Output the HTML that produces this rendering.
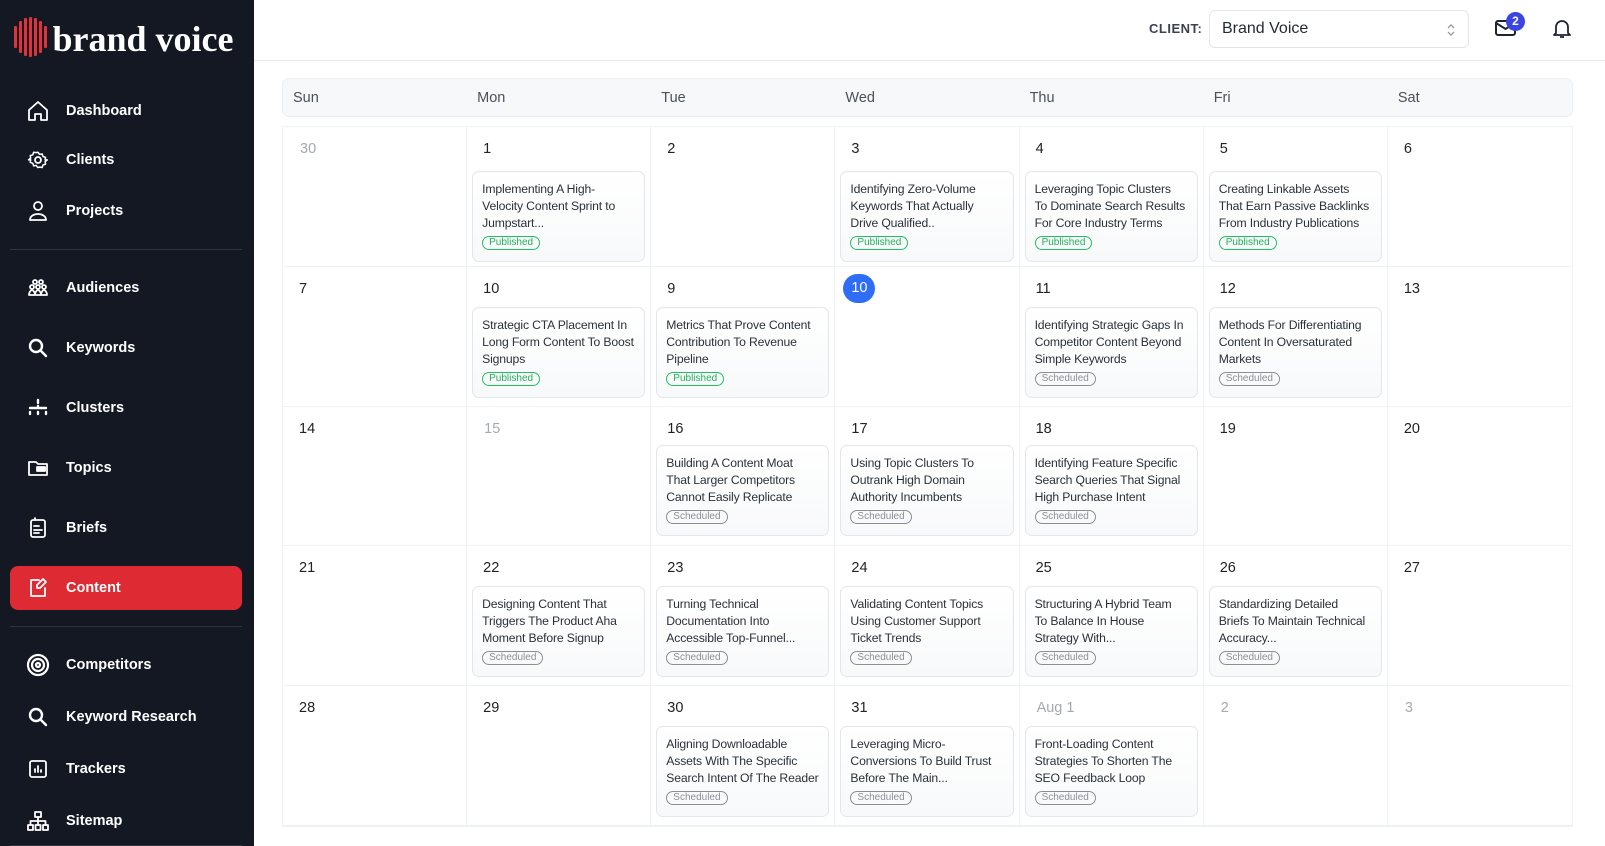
<!DOCTYPE html>
<html><head><meta charset="utf-8"><style>
*{box-sizing:border-box;margin:0;padding:0}
body{width:1605px;height:846px;overflow:hidden;font-family:"Liberation Sans",Arial,sans-serif;background:#fff;position:relative;color:#1f2430}
.sb{position:absolute;left:0;top:0;width:254px;height:846px;background:#131823;color:#fff}
.logo{position:absolute;left:14px;top:16px;display:flex;align-items:center}
.logo .bars{display:flex;gap:2.5px;align-items:center;margin-right:6px}
.logo .bars i{display:block;width:2.5px;background:#e0323a;border-radius:1px}
.logo span{font-family:"Liberation Serif",serif;font-weight:bold;font-size:36px;letter-spacing:0px;color:#fff;position:relative;top:2px}
.it{position:absolute;left:26px;display:flex;align-items:center;font-size:14.5px;font-weight:bold;height:24px}
.it svg{width:24px;height:24px;margin-right:16px;fill:none;stroke:#fff;stroke-width:1.8;stroke-linecap:round;stroke-linejoin:round}
.div{position:absolute;left:10px;width:232px;height:1px;background:#2c3342}
.act{position:absolute;left:10px;top:566px;width:232px;height:44px;background:#dd2a33;border-radius:8px}
.hdr{position:absolute;left:254px;top:0;right:0;height:61px;border-bottom:1px solid #e5e7eb}
.cl{position:absolute;left:1149px;top:21px;font-size:13px;font-weight:bold;color:#3a4150;letter-spacing:.5px}
.sel{position:absolute;left:1209px;top:10px;width:260px;height:38px;border:1px solid #e2e5ea;border-radius:6px;font-size:16px;padding:9px 12px;color:#252a35}
.wk{position:absolute;left:282px;top:78px;width:1291px;height:39px;background:#f7f8fa;border:1px solid #eceef2;border-radius:7px;display:grid;grid-template-columns:repeat(7,1fr)}
.wk div{font-size:14.5px;color:#4a505c;padding:11px 10px}
.grid{position:absolute;left:282px;top:126px;width:1291px;height:701px;display:grid;grid-template-columns:repeat(7,1fr);grid-template-rows:repeat(5,1fr);border:1px solid #eef1f5}
.c{border-right:1px solid #eef1f5;border-bottom:1px solid #eef1f5;position:relative}
.c:nth-child(7n){border-right:none}
.d{position:absolute;left:16px;top:14px;font-size:14.5px;color:#222}
.d.g{color:#a5a9b0;left:17px}
.d.t{left:8px;top:7px;width:32px;height:29px;border-radius:15px;background:#2f6df6;color:#fff;text-align:center;line-height:29px}
.card{position:absolute;left:5px;right:5px;top:44px;height:91px;border:1px solid #e3e6ea;border-radius:7px;background:linear-gradient(#fff,#f8f9fa);padding:9px 2px 0 9px;font-size:12.2px;letter-spacing:-0.15px;line-height:17px;color:#2b303a;white-space:nowrap;overflow:hidden}
.b{display:inline-block;margin-top:4px;font-size:10px;letter-spacing:0;line-height:12px;padding:0 6px;border-radius:8px;border:1px solid #22c063;color:#22b05c}
.b.s{border-color:#8a8f97;color:#8a8f97}
</style></head><body>
<div class="sb">
 <div class="logo"><div class="bars">
  <i style="height:22px"></i><i style="height:32px"></i><i style="height:38px"></i><i style="height:40px"></i><i style="height:38px"></i><i style="height:32px"></i><i style="height:22px"></i></div><span>brand voice</span></div>
 <div class="it" style="top:99px"><svg viewBox="0 0 24 24"><path d="M3 11l9-8 9 8v10h-6v-6h-6v6H3z"/></svg>Dashboard</div>
 <div class="it" style="top:148px"><svg viewBox="0 0 24 24"><circle cx="12" cy="12" r="3"/><path d="M12 3l2 2.5 3-.5 1 3 3 1-.5 3L23 12l-2.5 2 .5 3-3 1-1 3-3-.5L12 21l-2-2.5-3 .5-1-3-3-1 .5-3L1 12l2.5-2L3 7l3-1 1-3 3 .5z" transform="scale(.85) translate(2 2)"/></svg>Clients</div>
 <div class="it" style="top:199px"><svg viewBox="0 0 24 24"><circle cx="12" cy="7" r="4"/><path d="M4 21c0-4 4-6 8-6s8 2 8 6z"/></svg>Projects</div>
 <div class="div" style="top:249px"></div>
 <div class="it" style="top:276px"><svg viewBox="0 0 24 24"><circle cx="9" cy="6" r="2"/><circle cx="15" cy="6" r="2"/><circle cx="6" cy="11" r="2"/><circle cx="12" cy="11" r="2"/><circle cx="18" cy="11" r="2"/><path d="M3 19c0-3 2-5 3-5s3 2 3 5zM9 19c0-3 2-5 3-5s3 2 3 5zM15 19c0-3 2-5 3-5s3 2 3 5z"/></svg>Audiences</div>
 <div class="it" style="top:336px"><svg viewBox="0 0 24 24" style="stroke-width:2.4"><circle cx="10" cy="10" r="6"/><path d="M15 15l5 5"/></svg>Keywords</div>
 <div class="it" style="top:396px"><svg viewBox="0 0 24 24" style="stroke-width:2.4"><path d="M12 4v3M12 10v2M4 12h16M4 16v2M12 16v2M20 16v2"/></svg>Clusters</div>
 <div class="it" style="top:456px"><svg viewBox="0 0 24 24"><path d="M3 6h7l2 2h9v11H3z"/><rect x="11" y="11" width="8" height="4" fill="#fff"/></svg>Topics</div>
 <div class="it" style="top:516px"><svg viewBox="0 0 24 24"><rect x="5" y="4" width="14" height="17" rx="2"/><path d="M9 4V2M8 10h5M8 14h8M8 17h5"/></svg>Briefs</div>
 <div class="act"></div>
 <div class="it" style="top:576px"><svg viewBox="0 0 24 24"><path d="M13 4H5v16h14v-8"/><path d="M17 3l3 3-6 6h-3V9z"/></svg>Content</div>
 <div class="div" style="top:626px"></div>
 <div class="it" style="top:653px"><svg viewBox="0 0 24 24" style="stroke-width:2.2"><circle cx="12" cy="12" r="10"/><circle cx="12" cy="12" r="6"/><circle cx="12" cy="12" r="2"/></svg>Competitors</div>
 <div class="it" style="top:705px"><svg viewBox="0 0 24 24" style="stroke-width:2.4"><circle cx="10" cy="10" r="6"/><path d="M15 15l5 5"/></svg>Keyword Research</div>
 <div class="it" style="top:757px"><svg viewBox="0 0 24 24"><rect x="4" y="4" width="16" height="16" rx="2"/><path d="M9 15v-3M12 15V9M15 15v-2"/></svg>Trackers</div>
 <div class="it" style="top:809px"><svg viewBox="0 0 24 24"><rect x="9" y="3" width="6" height="5"/><rect x="2" y="16" width="5" height="5"/><rect x="9.5" y="16" width="5" height="5"/><rect x="17" y="16" width="5" height="5"/><path d="M12 8v4M4.5 16v-4h15v4M12 12v4"/></svg>Sitemap</div>
 <div class="div" style="top:845px"></div>
</div>
<div class="hdr"></div>
<div class="cl">CLIENT:</div>
<div class="sel">Brand Voice<svg style="position:absolute;right:12px;top:11px" width="10" height="16" viewBox="0 0 10 16" fill="none" stroke="#9aa0a8" stroke-width="1.4"><path d="M2 6l3-3 3 3M2 10l3 3 3-3"/></svg></div>
<svg style="position:absolute;left:1494px;top:17px" width="24" height="22" viewBox="0 0 24 22" fill="none" stroke="#1f2430" stroke-width="2"><rect x="2" y="4" width="19" height="14" rx="2"/><path d="M2 6l9.5 6L21 6"/></svg>
<div style="position:absolute;left:1506px;top:12px;width:19px;height:19px;border-radius:10px;background:#3b45e0;color:#fff;font-size:12px;font-weight:bold;text-align:center;line-height:19px">2</div>
<svg style="position:absolute;left:1550px;top:16px" width="24" height="24" viewBox="0 0 24 24" fill="none" stroke="#1f2430" stroke-width="1.8" stroke-linejoin="round"><path d="M6 17V11a6 6 0 0 1 12 0v6l2 2H4z"/><path d="M10 21h4"/></svg>
<div class="wk"><div>Sun</div><div>Mon</div><div>Tue</div><div>Wed</div><div>Thu</div><div>Fri</div><div>Sat</div></div>
<div class="grid">
<div class="c"><div class="d g">30</div></div>
<div class="c"><div class="d">1</div><div class="card">Implementing A High-<br>Velocity Content Sprint to<br>Jumpstart...<br><span class="b">Published</span></div></div>
<div class="c"><div class="d">2</div></div>
<div class="c"><div class="d">3</div><div class="card">Identifying Zero-Volume<br>Keywords That Actually<br>Drive Qualified..<br><span class="b">Published</span></div></div>
<div class="c"><div class="d">4</div><div class="card">Leveraging Topic Clusters<br>To Dominate Search Results<br>For Core Industry Terms<br><span class="b">Published</span></div></div>
<div class="c"><div class="d">5</div><div class="card">Creating Linkable Assets<br>That Earn Passive Backlinks<br>From Industry Publications<br><span class="b">Published</span></div></div>
<div class="c"><div class="d">6</div></div>

<div class="c"><div class="d">7</div></div>
<div class="c"><div class="d">10</div><div class="card" style="top:40px">Strategic CTA Placement In<br>Long Form Content To Boost<br>Signups<br><span class="b">Published</span></div></div>
<div class="c"><div class="d">9</div><div class="card" style="top:40px">Metrics That Prove Content<br>Contribution To Revenue<br>Pipeline<br><span class="b">Published</span></div></div>
<div class="c"><div class="d t">10</div></div>
<div class="c"><div class="d">11</div><div class="card" style="top:40px">Identifying Strategic Gaps In<br>Competitor Content Beyond<br>Simple Keywords<br><span class="b s">Scheduled</span></div></div>
<div class="c"><div class="d">12</div><div class="card" style="top:40px">Methods For Differentiating<br>Content In Oversaturated<br>Markets<br><span class="b s">Scheduled</span></div></div>
<div class="c"><div class="d">13</div></div>

<div class="c"><div class="d">14</div></div>
<div class="c"><div class="d g">15</div></div>
<div class="c"><div class="d">16</div><div class="card" style="top:38px">Building A Content Moat<br>That Larger Competitors<br>Cannot Easily Replicate<br><span class="b s">Scheduled</span></div></div>
<div class="c"><div class="d">17</div><div class="card" style="top:38px">Using Topic Clusters To<br>Outrank High Domain<br>Authority Incumbents<br><span class="b s">Scheduled</span></div></div>
<div class="c"><div class="d">18</div><div class="card" style="top:38px">Identifying Feature Specific<br>Search Queries That Signal<br>High Purchase Intent<br><span class="b s">Scheduled</span></div></div>
<div class="c"><div class="d">19</div></div>
<div class="c"><div class="d">20</div></div>

<div class="c"><div class="d">21</div></div>
<div class="c"><div class="d">22</div><div class="card" style="top:40px">Designing Content That<br>Triggers The Product Aha<br>Moment Before Signup<br><span class="b s">Scheduled</span></div></div>
<div class="c"><div class="d">23</div><div class="card" style="top:40px">Turning Technical<br>Documentation Into<br>Accessible Top-Funnel...<br><span class="b s">Scheduled</span></div></div>
<div class="c"><div class="d">24</div><div class="card" style="top:40px">Validating Content Topics<br>Using Customer Support<br>Ticket Trends<br><span class="b s">Scheduled</span></div></div>
<div class="c"><div class="d">25</div><div class="card" style="top:40px">Structuring A Hybrid Team<br>To Balance In House<br>Strategy With...<br><span class="b s">Scheduled</span></div></div>
<div class="c"><div class="d">26</div><div class="card" style="top:40px">Standardizing Detailed<br>Briefs To Maintain Technical<br>Accuracy...<br><span class="b s">Scheduled</span></div></div>
<div class="c"><div class="d">27</div></div>

<div class="c"><div class="d">28</div></div>
<div class="c"><div class="d">29</div></div>
<div class="c"><div class="d">30</div><div class="card" style="top:40px">Aligning Downloadable<br>Assets With The Specific<br>Search Intent Of The Reader<br><span class="b s">Scheduled</span></div></div>
<div class="c"><div class="d">31</div><div class="card" style="top:40px">Leveraging Micro-<br>Conversions To Build Trust<br>Before The Main...<br><span class="b s">Scheduled</span></div></div>
<div class="c"><div class="d g">Aug 1</div><div class="card" style="top:40px">Front-Loading Content<br>Strategies To Shorten The<br>SEO Feedback Loop<br><span class="b s">Scheduled</span></div></div>
<div class="c"><div class="d g">2</div></div>
<div class="c"><div class="d g">3</div></div>
</div>
</body></html>
